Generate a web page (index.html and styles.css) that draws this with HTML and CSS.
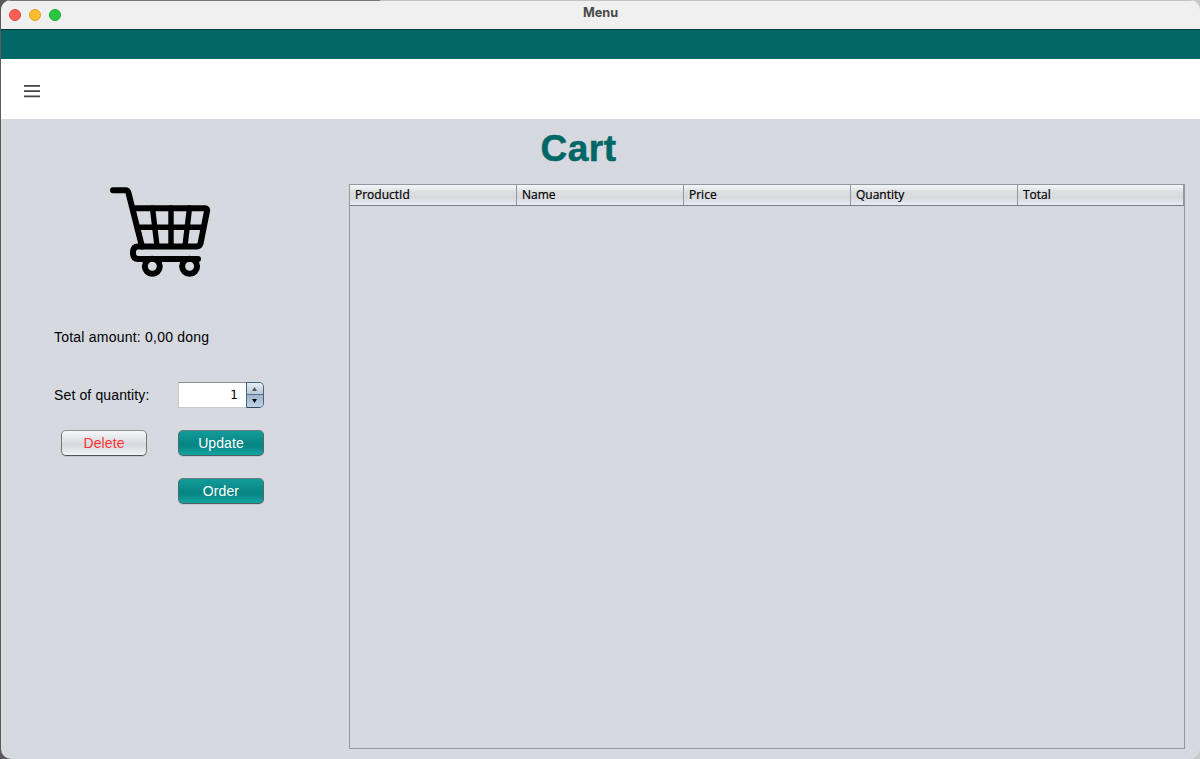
FILE: index.html
```html
<!DOCTYPE html>
<html lang="en">
<head>
<meta charset="utf-8">
<title>Menu</title>
<link rel="stylesheet" href="styles.css">
</head>
<body>
<div class="window">
  <header class="titlebar">
    <div class="lights"><i class="light red"></i><i class="light yellow"></i><i class="light green"></i></div>
    <span class="title">Menu</span>
  </header>
  <div class="band"></div>
  <nav class="toolbar">
    <svg class="menu-icon" width="16" height="13" viewBox="0 0 16 13"><path d="M0 .9h16M0 6.100h16M0 11.300h16" stroke="#444" stroke-width="1.7"/></svg>
  </nav>
  <main class="content">
    <h1 class="heading">Cart</h1>
    <div class="columns">
      <section class="side">
        <svg class="cart-icon" width="102" height="92" viewBox="109 186 102 92" fill="none" stroke="#000" stroke-width="6" stroke-linecap="round" stroke-linejoin="round">
          <path d="M113 190.200h12.500q2.300 0 3 2.800L142 246.500"/>
          <path d="M135 208.200h70q2.500 0 2 3l-6.400 32q-.7 3.300-4 3.300H138q-5 0-5 6.200t5 6.200h60"/>
          <path d="M152.500 208l4.500 38M171 208v38M189.500 208l-4.500 38M138 227.300h65" stroke-width="5.4"/>
          <circle cx="152.300" cy="266.300" r="7.500"/>
          <circle cx="189.600" cy="266.300" r="7.500"/>
        </svg>
        <p class="label amount">Total amount: 0,00 dong</p>
        <div class="controls">
          <label class="label">Set of quantity:</label>
          <div class="spinner">
            <span class="value">1</span>
            <div class="arrows">
              <span class="arrow up"><svg width="5" height="4"><path d="M0 4L2.500 0 5 4z" fill="#555"/></svg></span>
              <span class="arrow down"><svg width="5" height="4"><path d="M0 0h5L2.500 4z" fill="#000"/></svg></span>
            </div>
          </div>
          <button class="button delete">Delete</button>
          <button class="button primary">Update</button>
          <button class="button primary order">Order</button>
        </div>
      </section>
      <section class="table">
        <div class="table-head">
          <span class="cell">ProductId</span><span class="cell">Name</span><span class="cell">Price</span><span class="cell">Quantity</span><span class="cell">Total</span>
        </div>
      </section>
    </div>
  </main>
</div>
</body>
</html>
```
FILE: styles.css
```css
* { box-sizing: border-box; }
body {
  margin: 0;
  height: 759px;
  overflow: hidden;
  padding-left: 1px;
  background: linear-gradient(90deg, #5b595e 0 380px, #c8c8c8 381px);
  font-family: "Liberation Sans", Arial, sans-serif;
}
.window {
  height: 759px;
  display: flex;
  flex-direction: column;
  border-radius: 10px;
  overflow: hidden;
  background: #d6d9e0;
}
.titlebar {
  height: 30px;
  flex: none;
  display: grid;
  grid-template-columns: 1fr auto 1fr;
  background: #f0f0f0;
  border-top: 1px solid;
  border-image: linear-gradient(90deg, #77757a 0 379px, #c4c3c4 380px) 1;
  border-bottom: 0;
}
.lights { display: flex; gap: 8px; padding: 8px 0 0 8px; }
.light { width: 12px; height: 12px; border-radius: 50%; border: 1px solid; }
.red { background: #ff5f57; border-color: #e1483f; }
.yellow { background: #febc2e; border-color: #dfa023; }
.green { background: #28c840; border-color: #1dad2b; }
.title {
  font: bold 12.7px/24px Inter, sans-serif;
  color: #4a4a4a;
}
.band { height: 30px; margin-top: -1px; flex: none; background: #006666; border-top: 1px solid #003c38; }
.toolbar { height: 60px; flex: none; background: #fff; padding: 26px 0 0 23px; }
.menu-icon { display: block; }
.content { flex: 1; padding: 0 15px 10px 0; display: flex; flex-direction: column; }
.heading {
  margin: 0;
  height: 65px;
  padding-left: 539.500px;
  font-size: 37px;
  line-height: 59px;
  letter-spacing: 0.5px;
  -webkit-text-stroke: 0.5px #006666;
  color: #006666;
}
.columns { flex: 1; display: grid; grid-template-columns: 348px 1fr; }
.side { padding: 2px 0 0 53px; }
.cart-icon { display: block; margin-left: 55px; }
.label { font-size: 14px; line-height: 20px; margin: 0; color: #000; white-space: nowrap; letter-spacing: 0.13px; }
.amount { margin-top: 49px; letter-spacing: 0.22px; }
.controls {
  display: grid;
  grid-template-columns: 124px 86px;
  grid-auto-rows: 26px;
  row-gap: 22px;
  align-items: center;
  margin-top: 35px;
}
.spinner { height: 26px; display: flex; }
.value {
  flex: 1;
  background: #fff;
  border: 1px solid #c4c7cc;
  border-top-color: #8c8e92;
  border-right: 0;
  padding-right: 8px;
  text-align: right;
  font: 12px/25px "DejaVu Sans", sans-serif;
}
.arrows {
  width: 18px;
  display: grid;
  grid-template-rows: 12px 1fr;
  border: 1px solid #48657f;
  border-bottom-color: #2c4760;
  border-radius: 0 5px 5px 0;
  overflow: hidden;
}
.arrow { display: flex; align-items: center; justify-content: center; padding-right: 1px; }
.up { background: linear-gradient(#e7edf3, #b8c8d8); border-bottom: 1px solid #58738e; }
.down { background: linear-gradient(#9fb5cb, #bfd2e5); }
.button {
  width: 86px;
  height: 26px;
  padding: 0;
  border: 1px solid;
  border-radius: 5px;
  font: 14px/22px "Liberation Sans", Arial, sans-serif;
  letter-spacing: 0.1px;
  box-shadow: 0 1px 0 #c5c8ce;
}
.delete {
  margin-left: 7px;
  color: #ff3333;
  border-color: #8f9196 #74767b #505257;
  background: linear-gradient(#f8f8fa, #d5d8dd 58%, #f0f2f6);
}
.primary {
  color: #fff;
  border-color: #687d80 #50686b #4b5b60;
  background: linear-gradient(#129c9b, #058482 58%, #10a4a1);
}
.order { grid-column: 2; }
.table { border: 1px solid #9297a1; }
.table-head {
  height: 21px;
  display: grid;
  grid-template-columns: repeat(5, 167px);
  width: 834px;
  overflow: hidden;
  border-bottom: 1px solid #777c89;
  background: linear-gradient(#f5f6f8, #dcdee1 35%, #d8dadd 65%, #e9ecf5);
}
.cell {
  padding-left: 5px;
  font: 12px/20px "Open Sans", sans-serif;
  -webkit-text-stroke: 0.2px #000;
  color: #000;
  border-right: 1px solid #9297a1;
}
.cell:last-child { width: 166px; }
```
